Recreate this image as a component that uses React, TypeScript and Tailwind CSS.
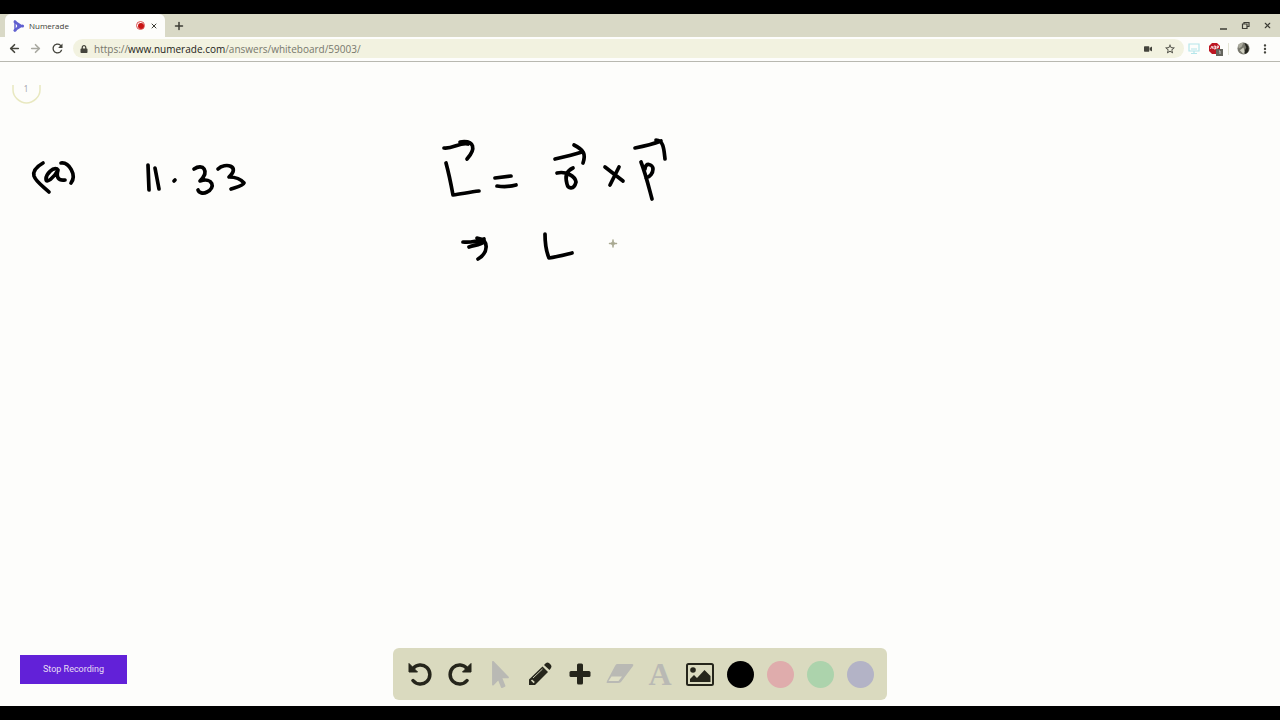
import React from 'react';
import { ArrowLeft, ArrowRight, Plus, X } from 'lucide-react';
import { FaLock, FaMousePointer, FaVideo } from 'react-icons/fa';
import { MdMoreVert, MdRefresh, MdStarBorder } from 'react-icons/md';

const colors = [
  { name: 'Black', className: 'bg-black' },
  { name: 'Red', className: 'bg-[#dfacac]' },
  { name: 'Green', className: 'bg-[#acd3ac]' },
  { name: 'Blue', className: 'bg-[#b3b3c6]' },
];

const NumeradeLogo = () => (
  <svg viewBox="0 0 12 12" className="size-3 shrink-0" fill="none" stroke="#6060d0" strokeWidth="1.5">
    <path d="M2 1.5 9 6 2 10.5ZM2 1.5 5.5 6 2 10.5M5.5 6h4" />
    <g fill="#6060d0" stroke="none">
      <circle cx="2" cy="1.7" r="1.5" />
      <circle cx="2" cy="10.3" r="1.5" />
      <circle cx="9.5" cy="6" r="1.6" />
      <circle cx="5.5" cy="6" r="1.3" />
    </g>
  </svg>
);

const TabStrip = () => (
  <div className="flex h-[23px] items-stretch bg-[#d9d9c6] pl-[5px] text-[#3c3c34]">
    <div className="flex w-40 items-center rounded-t-md bg-[#fdfdfb] pr-[2px] pl-2">
      <NumeradeLogo />
      <span className="ml-1 flex-1 font-['Open_Sans'] text-[8px]">Numerade</span>
      <span className="mr-1 flex size-[9px] items-center justify-center rounded-full border border-[#dc5050]">
        <span className="size-[6px] rounded-full bg-[#c91515]" />
      </span>
      <button aria-label="Close tab" className="mr-1 p-px">
        <X size={8} strokeWidth={3} />
      </button>
    </div>
    <button aria-label="New tab" className="ml-1 px-1">
      <Plus size={12} strokeWidth={3} />
    </button>
    <div className="ml-auto flex items-center gap-[13px] pr-2">
      <button aria-label="Minimize">
        <svg viewBox="0 0 9 9" className="size-[9px]"><path d="M1 8h7" stroke="currentColor" strokeWidth="1.5" /></svg>
      </button>
      <button aria-label="Restore">
        <svg viewBox="0 0 9 9" className="size-[9px]" fill="none" stroke="currentColor">
          <path d="M3 2.5V1.5h5v4H6.5M1.5 3h4.5v4.5H1.5Z" strokeWidth="1.2" />
        </svg>
      </button>
      <button aria-label="Close window">
        <X size={9} strokeWidth={3} />
      </button>
    </div>
  </div>
);

const AddressBar = () => (
  <div className="flex h-[25px] items-center border-b border-[#b8b8b0] bg-[#fdfdfb] pr-2 pb-px pl-2 text-[#44443c]">
    <button aria-label="Back"><ArrowLeft size={13} strokeWidth={3} /></button>
    <button aria-label="Forward" className="ml-2 text-[#a8a8a0]"><ArrowRight size={13} strokeWidth={3} /></button>
    <button aria-label="Reload" className="ml-2"><MdRefresh size={15} /></button>
    <div className="ml-2 flex h-[19px] flex-1 items-center rounded-full bg-[#f2f2e0] pr-2 pl-[7px]">
      <FaLock size={8} />
      <a href="https://www.numerade.com/answers/whiteboard/59003/" className="ml-[6px] font-['Open_Sans'] text-[10px] leading-4 text-[#77776c]">
        https://<span className="text-[#1c1c18]">www.numerade.com</span>/answers/whiteboard/59003/
      </a>
      <FaVideo size={8} className="ml-auto" />
      <button aria-label="Bookmark" className="ml-3"><MdStarBorder size={12} /></button>
    </div>
    <button aria-label="Screen capture" className="ml-1">
      <svg viewBox="0 0 12 12" className="size-3" fill="none" stroke="#b5e6ea" strokeWidth="1.2">
        <path d="M1 1h10v7H1ZM3 6h6M6 8v2M3 10.5h6" />
      </svg>
    </button>
    <button aria-label="Ad blocker" className="ml-2">
      <svg viewBox="0 0 16 16" className="size-4">
        <path d="M4 2h5l3 3v5l-3 3H4L1 10V5Z" fill="#bd1622" />
        <path d="M2.5 8 4 5l1 3M6 8V5h1.5v3H6M9 8V5h1.5v1.5H9" fill="none" stroke="#fff" strokeWidth=".8" />
        <path d="M8 8h7v7H8Z" fill="#64645c" />
        <path d="M11 10h1v3" fill="none" stroke="#ddd" strokeWidth=".8" />
      </svg>
    </button>
    <span className="mx-1 h-3 w-px bg-[#e4e4d4]" />
    <button aria-label="Profile" className="ml-1">
      <svg viewBox="0 0 14 14" className="size-[13px]">
        <circle cx="7" cy="7" r="6.5" fill="#77776c" />
        <path d="M1 4a6.5 6.5 0 0 1 6-3.5L5 5 2 7Z" fill="#a9a99c" />
        <path d="M8 1a6.5 6.5 0 0 1 1 12L8 10l2-4Z" fill="#22221c" />
        <path d="M3 9 7 6l1 4-1 3Z" fill="#cfcfc0" />
      </svg>
    </button>
    <button aria-label="Menu" className="ml-2"><MdMoreVert size={14} /></button>
  </div>
);

const Handwriting = () => (
  <svg viewBox="0 0 680 220" className="block w-[680px] max-w-full" role="img" aria-label="Handwritten notes">
    <g transform="translate(0 -62)" fill="none" stroke="#000" strokeWidth="3.7" strokeLinecap="round" strokeLinejoin="round">
      <path d="M43 163C36 167 33 172 34 176C36 182 44 187 49 192" />
      <path d="M57 169C53 167 46 174 46 179C46 184 54 178 58 170C56 177 58 181 65 180" />
      <path d="M61 163C69 162 77 175 71 183" />
      <path d="M148 165 149 190M155 168 159 189M174 181 175 180" />
      <path d="M194 169C203 163 210 171 200 181C213 177 216 188 207 192C203 194 199 193 198 190" />
      <path d="M218 169C225 162 241 166 229 177C234 177 240 178 244 183C243 186 237 187 231 189" />
      <path d="M444 148C453 149 460 142 468 144M460 142C475 140 476 149 467 159" />
      <path d="M446 163C449 174 451 184 453 195C461 194 470 192 479 191" />
      <path d="M495 178 511 176M497 186C504 187 509 187 516 185" />
      <path d="M555 159C564 157 573 155 582 152M574 145C584 150 586 154 583 163" />
      <path d="M557 173C566 171 575 176 576 182C574 190 568 189 567 184C565 177 566 171 573 168" />
      <path d="M605 167 623 181M619 167 610 185" />
      <path d="M635 148C645 146 653 144 661 141M656 140C664 140 664 151 665 159" />
      <path d="M641 162C646 175 649 188 652 199M645 169C645 162 653 164 653 169C653 173 650 177 646 178" />
      <path d="M463 242C472 243 478 241 484 239M469 247C475 245 480 245 484 242M477 238C490 240 488 253 478 259" />
      <path d="M545 234C545 243 546 251 549 258C557 257 564 255 572 253" />
      <path d="M613 240v7M609.5 243.5h7" stroke="#a8a890" strokeWidth="1.5" />
      <circle cx="613" cy="243.5" r="1.6" stroke="#a8a890" strokeWidth="1" />
    </g>
    <path d="M13 23v5c0 7 7 13 13.5 13S40 35 40 28v-5" fill="none" stroke="#e8e8c0" strokeWidth="1.5" />
    <text x="26" y="30" textAnchor="middle" fill="#a5a5ae" className="font-['Noto_Sans'] text-[8px]">1</text>
  </svg>
);

const UndoIcon = ({ flip = false }: { flip?: boolean }) => (
  <svg viewBox="0 0 24 24" className="size-6">
    <g transform={flip ? 'matrix(-1 0 0 1 24 0)' : undefined}>
      <path d="M5 6.5A9.5 9.5 0 1 1 5 18.5" fill="none" stroke="currentColor" strokeWidth="3.5" strokeLinecap="round" />
      <path d="M1 1.5 9.5 10H1Z" fill="currentColor" stroke="currentColor" strokeLinejoin="round" />
    </g>
  </svg>
);

const Pencil = () => (
  <svg viewBox="0 0 24 24" className="size-6">
    <path d="m14.5 4.500 5.500 5.500L7 23H1v-5.500Z" fill="currentColor" />
    <path d="m16 3 2-2q1.500-1 3 0l2 2q1 1.500 0 3L21.500 8Z" fill="currentColor" />
    <path d="M5 16 14.500 7" stroke="#d9d9c0" strokeWidth=".9" />
    <path d="m3.500 18 2.700 2.700" stroke="#d9d9c0" strokeWidth="1.7" />
  </svg>
);

const Picture = () => (
  <svg viewBox="0 0 28 23" className="h-[23px] w-7">
    <rect x="1" y="1" width="26" height="21" rx="1.5" fill="none" stroke="currentColor" strokeWidth="2" />
    <circle cx="7" cy="7" r="2.8" fill="currentColor" />
    <path d="M4 19v-3l4-4 3 3 7.5-8 6 6v6Z" fill="currentColor" />
  </svg>
);

const Eraser = () => (
  <svg viewBox="0 0 28 20" className="h-5 w-7">
    <path d="M11 0h15q2 0 1 2L15 18q-1 1-3 1H1q-1 0 0-2L9 2q1-2 2-2Z" fill="currentColor" />
    <path d="M5.5 12.5H16L12.5 17H2.5Z" fill="#dfdfc6" />
  </svg>
);

const Toolbar = () => (
  <div className="flex h-[52px] items-center rounded-md bg-[#dadabf] px-[7px] text-[#25251b]">
    <button aria-label="Undo" className="flex w-10 justify-center"><UndoIcon /></button>
    <button aria-label="Redo" className="flex w-10 justify-center"><UndoIcon flip /></button>
    <button aria-label="Select" className="flex w-10 justify-center text-[#b9b9b4]"><FaMousePointer size={27} /></button>
    <button aria-label="Draw" className="flex w-10 justify-center"><Pencil /></button>
    <button aria-label="Add" className="flex w-10 justify-center">
      <svg viewBox="0 0 22 22" className="size-[22px]" fill="currentColor">
        <rect x="8" y="0.5" width="6" height="21" rx="1.5" />
        <rect x="0.5" y="8" width="21" height="6" rx="1.5" />
      </svg>
    </button>
    <button aria-label="Erase" className="flex w-10 justify-center text-[#b9b9b4]"><Eraser /></button>
    <button className="w-10 text-center font-['Liberation_Serif'] text-[32px] leading-8 font-bold text-[#b9b9b4]">A</button>
    <button aria-label="Image" className="flex w-10 justify-center"><Picture /></button>
    {colors.map((color) => (
      <button key={color.name} aria-label={color.name} className="flex w-10 justify-center">
        <span className={`size-[27px] rounded-full ${color.className}`} />
      </button>
    ))}
  </div>
);

const App: React.FC = () => {
  return (
    <div className="flex min-h-screen flex-col border-y-[14px] border-black bg-[#fdfdfb]">
      <header>
        <TabStrip />
        <AddressBar />
      </header>
      <main className="flex-1">
        <Handwriting />
      </main>
      <footer className="grid grid-cols-[1fr_auto_1fr] items-start px-5 pb-[6px]">
        <button className="mt-[7px] h-[29px] w-[107px] justify-self-start bg-[#6221d8] font-[Roboto] text-[9px] text-[#e6dcf4]">
          Stop Recording
        </button>
        <Toolbar />
      </footer>
    </div>
  );
};

export default App;
